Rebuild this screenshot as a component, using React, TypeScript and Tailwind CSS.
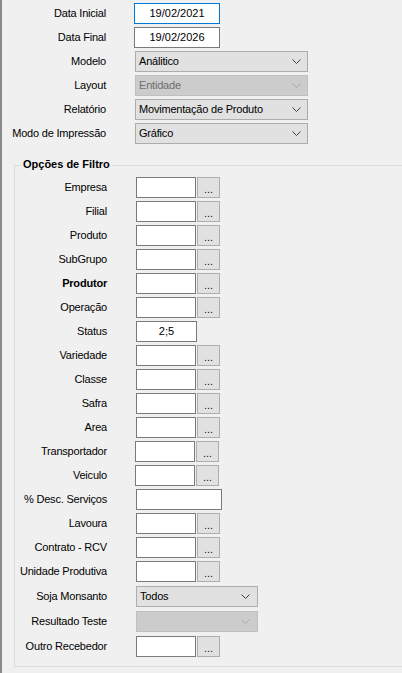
import React from "react";

const Chevron = ({ disabled }: { disabled?: boolean }) => (
  <svg width="9" height="5" viewBox="0 0 9 5" className="shrink-0">
    <polyline
      points="0.5,0.5 4.5,4.5 8.5,0.5"
      fill="none"
      stroke={disabled ? "#a8a8a8" : "#3c3c3c"}
      strokeWidth="1"
    />
  </svg>
);

const TopRow = ({ label, children }: { label: string; children: React.ReactNode }) => (
  <div className="flex h-[21px] items-center">
    <div className="w-[104px] whitespace-nowrap text-right tracking-[-0.2px]">{label}</div>
    {children}
  </div>
);

const DateBox = ({ value, focused }: { value: string; focused?: boolean }) => (
  <div
    className={
      "ml-[28px] flex h-[21px] w-[86px] items-center justify-center border bg-white " +
      (focused ? "border-[#0078d7]" : "border-[#7a7a7a]")
    }
  >
    {value}
  </div>
);

const TopSelect = ({ value, disabled }: { value: string; disabled?: boolean }) => (
  <div
    className={
      "ml-[29px] flex h-[21px] w-[173px] items-center justify-between border pl-[3px] pr-[6px] " +
      (disabled ? "border-[#bfbfbf] bg-[#cccccc] text-[#6d6d6d]" : "border-[#adadad] bg-[#e1e1e1]")
    }
  >
    <span className="tracking-[-0.2px]">{value}</span>
    <Chevron disabled={disabled} />
  </div>
);

const Btn = () => (
  <div className="ml-[1px] flex h-[21px] w-[23px] items-end justify-center border border-[#adadad] bg-[#e1e1e1] pb-[2px] leading-[12px] text-[#1a1040]">
    ...
  </div>
);

type Row = {
  label: string;
  kind: "lookup" | "text" | "wide" | "select" | "selectDisabled";
  value?: string;
  bold?: boolean;
  shift?: boolean;
  mt?: boolean;
};

const rows: Row[] = [
  { label: "Empresa", kind: "lookup" },
  { label: "Filial", kind: "lookup" },
  { label: "Produto", kind: "lookup" },
  { label: "SubGrupo", kind: "lookup" },
  { label: "Produtor", kind: "lookup", bold: true },
  { label: "Operação", kind: "lookup" },
  { label: "Status", kind: "text", value: "2;5" },
  { label: "Variedade", kind: "lookup" },
  { label: "Classe", kind: "lookup" },
  { label: "Safra", kind: "lookup" },
  { label: "Area", kind: "lookup" },
  { label: "Transportador", kind: "lookup", shift: true },
  { label: "Veiculo", kind: "lookup", shift: true },
  { label: "% Desc. Serviços", kind: "wide" },
  { label: "Lavoura", kind: "lookup" },
  { label: "Contrato - RCV", kind: "lookup" },
  { label: "Unidade Produtiva", kind: "lookup" },
  { label: "Soja Monsanto", kind: "select", value: "Todos", mt: true },
  { label: "Resultado Teste", kind: "selectDisabled", mt: true },
  { label: "Outro Recebedor", kind: "lookup", mt: true },
];

const FilterRow = ({ r, first }: { r: Row; first: boolean }) => {
  const ml = r.shift ? "ml-[28px]" : "ml-[29px]";
  let control: React.ReactNode = null;
  if (r.kind === "lookup") {
    control = (
      <div className={"flex items-center " + ml}>
        <div className="h-[21px] w-[60px] border border-[#7a7a7a] bg-white" />
        <Btn />
      </div>
    );
  } else if (r.kind === "text") {
    control = (
      <div className={"flex h-[21px] w-[61px] items-center justify-center border border-[#7a7a7a] bg-white " + ml}>
        {r.value}
      </div>
    );
  } else if (r.kind === "wide") {
    control = <div className={"h-[21px] w-[86px] border border-[#7a7a7a] bg-white " + ml} />;
  } else if (r.kind === "select") {
    control = (
      <div
        className={
          "flex h-[21px] w-[122px] items-center justify-between border border-[#adadad] bg-[#e1e1e1] pl-[3px] pr-[7px] " + ml
        }
      >
        <span className="tracking-[-0.2px]">{r.value}</span>
        <Chevron />
      </div>
    );
  } else {
    control = (
      <div
        className={
          "flex h-[21px] w-[122px] items-center justify-end border border-[#bfbfbf] bg-[#cccccc] pl-[3px] pr-[7px] " + ml
        }
      >
        <Chevron disabled />
      </div>
    );
  }
  const mt = first ? "" : r.mt ? "mt-[4px]" : "mt-[3px]";
  return (
    <div className={"flex h-[21px] items-center " + mt}>
      <div className={"w-[92px] whitespace-nowrap text-right tracking-[-0.2px] " + (r.bold ? "font-bold" : "")}>
        {r.label}
      </div>
      {control}
    </div>
  );
};

export default function App() {
  return (
    <div className="h-[673px] w-[402px] overflow-hidden border-l-2 border-[#8a8a8a] bg-[#f0f0f0] font-['Liberation_Sans',Arial,sans-serif] text-[11px] leading-[13px] text-black">
      <div className="flex flex-col gap-[3px] pt-[3px]">
        <TopRow label="Data Inicial">
          <DateBox value="19/02/2021" focused />
        </TopRow>
        <TopRow label="Data Final">
          <DateBox value="19/02/2026" />
        </TopRow>
        <TopRow label="Modelo">
          <TopSelect value="Análitico" />
        </TopRow>
        <TopRow label="Layout">
          <TopSelect value="Entidade" disabled />
        </TopRow>
        <TopRow label="Relatório">
          <TopSelect value="Movimentação de Produto" />
        </TopRow>
        <TopRow label="Modo de Impressão">
          <TopSelect value="Gráfico" />
        </TopRow>
      </div>
      <div className="relative ml-[12px] mt-[21px] w-[420px] border border-[#dcdcdc] pb-[9px] pt-[11px]">
        <span className="absolute left-[6px] top-[-8px] bg-[#f0f0f0] px-[2px] font-bold leading-[13px]">
          Opções de Filtro
        </span>
        {rows.map((r, i) => (
          <FilterRow key={r.label} r={r} first={i === 0} />
        ))}
      </div>
    </div>
  );
}
